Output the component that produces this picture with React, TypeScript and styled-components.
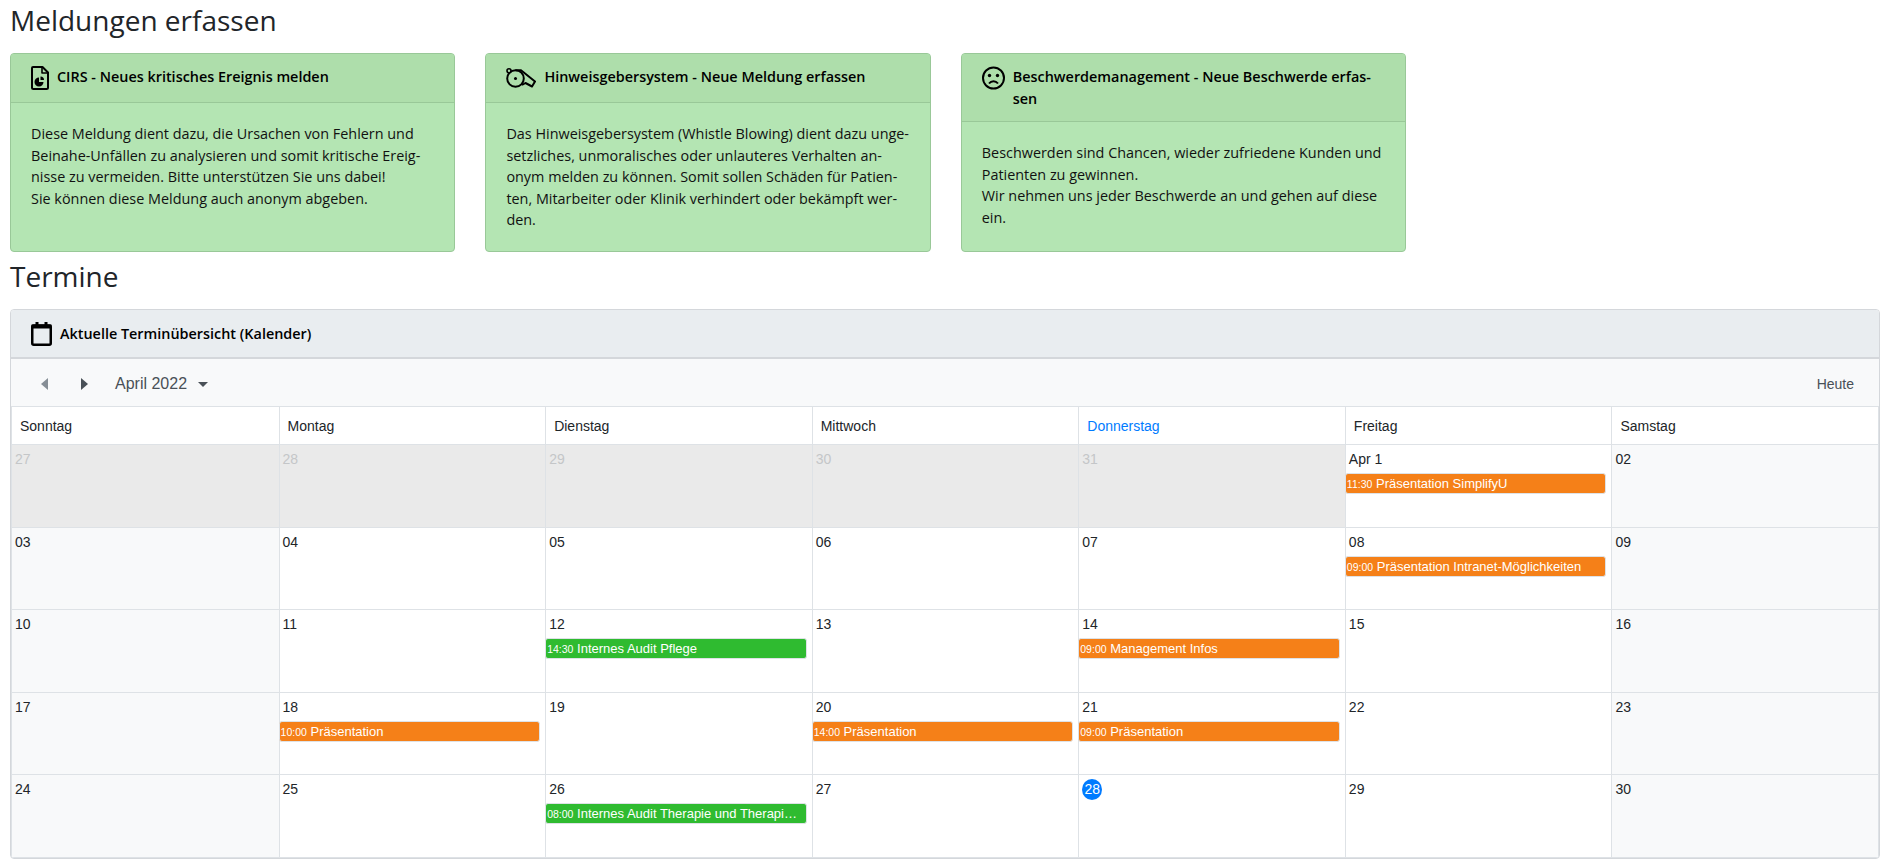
import React from 'react'
import styled, { createGlobalStyle } from 'styled-components'

const GlobalStyle = createGlobalStyle`
	* {
		box-sizing: border-box;
	}
	html,
	body {
		margin: 0;
		padding: 0;
		background: #fff;
		color: #212529;
		font-family: 'Open Sans', sans-serif;
		font-size: 14.4px;
		line-height: 1.5;
	}
`

type Ev = { time: string; title: string; kind: 'orange' | 'green' }
type Day = {
	label: string
	muted?: boolean
	weekend?: boolean
	today?: boolean
	event?: Ev
}

const WEEKDAYS = ['Sonntag', 'Montag', 'Dienstag', 'Mittwoch', 'Donnerstag', 'Freitag', 'Samstag']

const WEEKS: Day[][] = [
	[
		{ label: '27', muted: true },
		{ label: '28', muted: true },
		{ label: '29', muted: true },
		{ label: '30', muted: true },
		{ label: '31', muted: true },
		{ label: 'Apr 1', event: { time: '11:30', title: 'Präsentation SimplifyU', kind: 'orange' } },
		{ label: '02', weekend: true },
	],
	[
		{ label: '03', weekend: true },
		{ label: '04' },
		{ label: '05' },
		{ label: '06' },
		{ label: '07' },
		{ label: '08', event: { time: '09:00', title: 'Präsentation Intranet-Möglichkeiten', kind: 'orange' } },
		{ label: '09', weekend: true },
	],
	[
		{ label: '10', weekend: true },
		{ label: '11' },
		{ label: '12', event: { time: '14:30', title: 'Internes Audit Pflege', kind: 'green' } },
		{ label: '13' },
		{ label: '14', event: { time: '09:00', title: 'Management Infos', kind: 'orange' } },
		{ label: '15' },
		{ label: '16', weekend: true },
	],
	[
		{ label: '17', weekend: true },
		{ label: '18', event: { time: '10:00', title: 'Präsentation', kind: 'orange' } },
		{ label: '19' },
		{ label: '20', event: { time: '14:00', title: 'Präsentation', kind: 'orange' } },
		{ label: '21', event: { time: '09:00', title: 'Präsentation', kind: 'orange' } },
		{ label: '22' },
		{ label: '23', weekend: true },
	],
	[
		{ label: '24', weekend: true },
		{ label: '25' },
		{ label: '26', event: { time: '08:00', title: 'Internes Audit Therapie und Therapieplanung', kind: 'green' } },
		{ label: '27' },
		{ label: '28', today: true },
		{ label: '29' },
		{ label: '30', weekend: true },
	],
]

function FileChartIcon() {
	return (
		<svg width="18" height="24" viewBox="0 0 18 24" fill="none">
			<path d="M2 1H11.500L17 6.500V21.500A1.500 1.500 0 0 1 15.500 23H2.500A1.500 1.500 0 0 1 1 21.500V2A1 1 0 0 1 2 1Z" stroke="#000" strokeWidth="2" strokeLinejoin="round" />
			<path d="M11 1V7H17" stroke="#000" strokeWidth="1.600" strokeLinejoin="round" />
			<path d="M8 11.500a4.500 4.500 0 1 0 4.500 4.500H8V11.500Z" fill="#000" />
			<path d="M9.500 10.500a3.500 3.500 0 0 1 3.500 3.500H9.500V10.500Z" fill="#000" />
		</svg>
	)
}

function WhistleIcon() {
	return (
		<svg width="30" height="20" viewBox="0 0 30 20" fill="none">
			<circle cx="9.500" cy="10.500" r="8.300" stroke="#000" strokeWidth="2" />
			<path d="M9.500 2.200L15 2.200L29 13.500L26 18.500L19.500 15L16 17" stroke="#000" strokeWidth="2" strokeLinejoin="round" />
			<circle cx="3" cy="2.800" r="2" stroke="#000" strokeWidth="1.600" fill="#aedeab" />
			<circle cx="9.500" cy="10.500" r="1.500" fill="#000" />
		</svg>
	)
}

function FrownIcon() {
	return (
		<svg width="23" height="24" viewBox="0 0 23 24" fill="none">
			<circle cx="11.500" cy="12" r="10.500" stroke="#000" strokeWidth="2" />
			<circle cx="7.500" cy="9.500" r="1.700" fill="#000" />
			<circle cx="15.500" cy="9.500" r="1.700" fill="#000" />
			<path d="M7 17.500c2.400-3 6.600-3 9 0" stroke="#000" strokeWidth="2" />
		</svg>
	)
}

function CalendarIcon() {
	return (
		<svg width="21" height="24" viewBox="0 0 21 24" fill="none">
			<rect x="1.250" y="3.500" width="18.500" height="19.250" rx="1.500" stroke="#000" strokeWidth="2.500" />
			<rect x="0.500" y="2.500" width="20" height="4" fill="#000" />
			<rect x="4.500" y="0" width="3" height="4" fill="#000" />
			<rect x="13.500" y="0" width="3" height="4" fill="#000" />
		</svg>
	)
}

const CARDS = [
	{
		icon: <FileChartIcon />,
		title: 'CIRS - Neues kritisches Ereignis melden',
		lines: [
			'Diese Meldung dient dazu, die Ursachen von Fehlern und',
			'Beinahe-Unfällen zu analysieren und somit kritische Ereig-',
			'nisse zu vermeiden. Bitte unterstützen Sie uns dabei!',
			'Sie können diese Meldung auch anonym abgeben.',
		],
	},
	{
		icon: <WhistleIcon />,
		title: 'Hinweisgebersystem - Neue Meldung erfassen',
		lines: [
			'Das Hinweisgebersystem (Whistle Blowing) dient dazu unge-',
			'setzliches, unmoralisches oder unlauteres Verhalten an-',
			'onym melden zu können. Somit sollen Schäden für Patien-',
			'ten, Mitarbeiter oder Klinik verhindert oder bekämpft wer-',
			'den.',
		],
	},
	{
		icon: <FrownIcon />,
		title: 'Beschwerdemanagement - Neue Beschwerde erfas-\nsen',
		lines: [
			'Beschwerden sind Chancen, wieder zufriedene Kunden und',
			'Patienten zu gewinnen.',
			'Wir nehmen uns jeder Beschwerde an und gehen auf diese',
			'ein.',
		],
	},
]

function App() {
	return (
		<>
			<GlobalStyle />
			<Page>
				<Heading>Meldungen erfassen</Heading>
				<CardRow>
					{CARDS.map((card) => (
						<ReportCard key={card.title}>
							<ReportHeader>
								<IconSlot>{card.icon}</IconSlot>
								<ReportTitle>{card.title}</ReportTitle>
							</ReportHeader>
							<ReportBody>
								{card.lines.map((line) => (
									<div key={line}>{line}</div>
								))}
							</ReportBody>
						</ReportCard>
					))}
				</CardRow>
				<Heading>Termine</Heading>
				<CalendarCard>
					<CalendarHeader>
						<CalendarIcon />
						<span>Aktuelle Terminübersicht (Kalender)</span>
					</CalendarHeader>
					<Toolbar>
						<Arrow $dir="left" />
						<Arrow $dir="right" />
						<MonthLabel>April 2022</MonthLabel>
						<Caret />
						<TodayButton>Heute</TodayButton>
					</Toolbar>
					<CalendarGrid>
						<WeekHead>
							{WEEKDAYS.map((name) => (
								<WeekdayCell key={name} $active={name === 'Donnerstag'}>
									{name}
								</WeekdayCell>
							))}
						</WeekHead>
						{WEEKS.map((week) => (
							<WeekRow key={week[0].label}>
								{week.map((day) => (
									<DayCell key={day.label} $muted={day.muted} $weekend={day.weekend}>
										{day.today ? <TodayBadge>{day.label}</TodayBadge> : <DayNumber $muted={day.muted}>{day.label}</DayNumber>}
										{day.event && (
											<EventChip $kind={day.event.kind}>
												<EventTime>{day.event.time}</EventTime> {day.event.title}
											</EventChip>
										)}
									</DayCell>
								))}
							</WeekRow>
						))}
					</CalendarGrid>
				</CalendarCard>
			</Page>
		</>
	)
}

const Page = styled.div`
	padding: 0 10px;
	width: 1890px;
`

const Heading = styled.h2`
	margin: 0;
	height: 53px;
	font-size: 28px;
	font-weight: 400;
	line-height: 41px;
`

const CardRow = styled.div`
	display: grid;
	grid-template-columns: repeat(3, 445.4px);
	column-gap: 30px;
	height: 199px;
	margin-bottom: 4px;
`

const ReportCard = styled.div`
	display: flex;
	flex-direction: column;
	background: #b4e5b3;
	border: 1px solid #99c898;
	border-radius: 4px;
	overflow: hidden;
`

const ReportHeader = styled.div`
	display: flex;
	align-items: flex-start;
	gap: 8px;
	padding: 12px 20px;
	background: #aedeab;
	border-bottom: 1px solid #99c898;
	font-weight: 600;
	color: #000;
`

const IconSlot = styled.div`
	display: flex;
	flex: none;
	height: 24px;
	align-items: center;
`

const ReportTitle = styled.div`
	white-space: pre-line;
`

const ReportBody = styled.div`
	padding: 20px;
	color: #111;
`

const CalendarCard = styled.div`
	border: 1px solid #d4d7db;
	border-radius: 4px;
	overflow: hidden;
	height: 550px;
`

const CalendarHeader = styled.div`
	display: flex;
	align-items: center;
	gap: 8px;
	height: 49px;
	padding: 0 20px;
	background: #e9edf0;
	border-bottom: 2px solid #d4d7db;
	font-weight: 600;
	color: #000;
`

const Toolbar = styled.div`
	display: flex;
	align-items: center;
	height: 48px;
	padding: 3px 25px 0 30px;
	background: #f8f9fa;
	border-bottom: 1px solid #dee2e6;
	font-family: 'Liberation Sans', sans-serif;
`

const Arrow = styled.span<{ $dir: 'left' | 'right' }>`
	width: 0;
	height: 0;
	margin-right: 33px;
	border-top: 6px solid transparent;
	border-bottom: 6px solid transparent;
	${(p) => (p.$dir === 'left' ? 'border-right: 7px solid #868e96;' : 'border-left: 7px solid #495057;')}
`

const MonthLabel = styled.span`
	margin-left: -6px;
	font-size: 16px;
	color: #495057;
`

const Caret = styled.span`
	width: 0;
	height: 0;
	margin-left: 11px;
	border-left: 5px solid transparent;
	border-right: 5px solid transparent;
	border-top: 5px solid #495057;
`

const TodayButton = styled.span`
	margin-left: auto;
	font-size: 14px;
	color: #495057;
`

const CalendarGrid = styled.div`
	border-left: 1px solid #dee2e6;
	border-right: 1px solid #dee2e6;
	font-family: 'Liberation Sans', sans-serif;
	font-size: 14px;
`

const WeekHead = styled.div`
	display: grid;
	grid-template-columns: repeat(7, minmax(0, 1fr));
	height: 38px;
	border-bottom: 1px solid #dee2e6;
`

const WeekdayCell = styled.div<{ $active?: boolean }>`
	padding: 9px 8px 0;
	color: ${(p) => (p.$active ? '#007bff' : '#212529')};
	border-left: 1px solid #dee2e6;

	&:first-child {
		border-left: none;
	}
`

const WeekRow = styled.div`
	display: grid;
	grid-template-columns: repeat(7, minmax(0, 1fr));
	height: 82.6px;
	border-bottom: 1px solid #dee2e6;
`

const DayCell = styled.div<{ $muted?: boolean; $weekend?: boolean }>`
	min-width: 0;
	padding: 3px 0 0;
	background: ${(p) => (p.$muted ? '#eaeaea' : p.$weekend ? '#f8f9fa' : '#fff')};
	border-left: 1px solid #dee2e6;

	&:first-child {
		border-left: none;
	}
`

const DayNumber = styled.div<{ $muted?: boolean }>`
	padding-left: 3px;
	height: 22px;
	line-height: 22px;
	color: ${(p) => (p.$muted ? '#c4c6c8' : '#212529')};
`

const TodayBadge = styled.div`
	width: 20px;
	height: 21px;
	margin: 1px 0 0 3px;
	border-radius: 50%;
	background: #007bff;
	color: #fff;
	line-height: 21px;
	text-align: center;
	font-size: 14px;
`

const EventChip = styled.div<{ $kind: 'orange' | 'green' }>`
	margin: 3px 5px 0 -1px;
	height: 21px;
	padding: 0 2px 0 1px;
	overflow: hidden;
	white-space: nowrap;
	text-overflow: ellipsis;
	border-radius: 3px;
	border: 1px solid #dee2e6;
	background: ${(p) => (p.$kind === 'orange' ? '#f58018' : '#2fbb30')};
	color: #fff;
	font-size: 13px;
	line-height: 19px;
`

const EventTime = styled.span`
	font-size: 10.5px;
`

export default App
